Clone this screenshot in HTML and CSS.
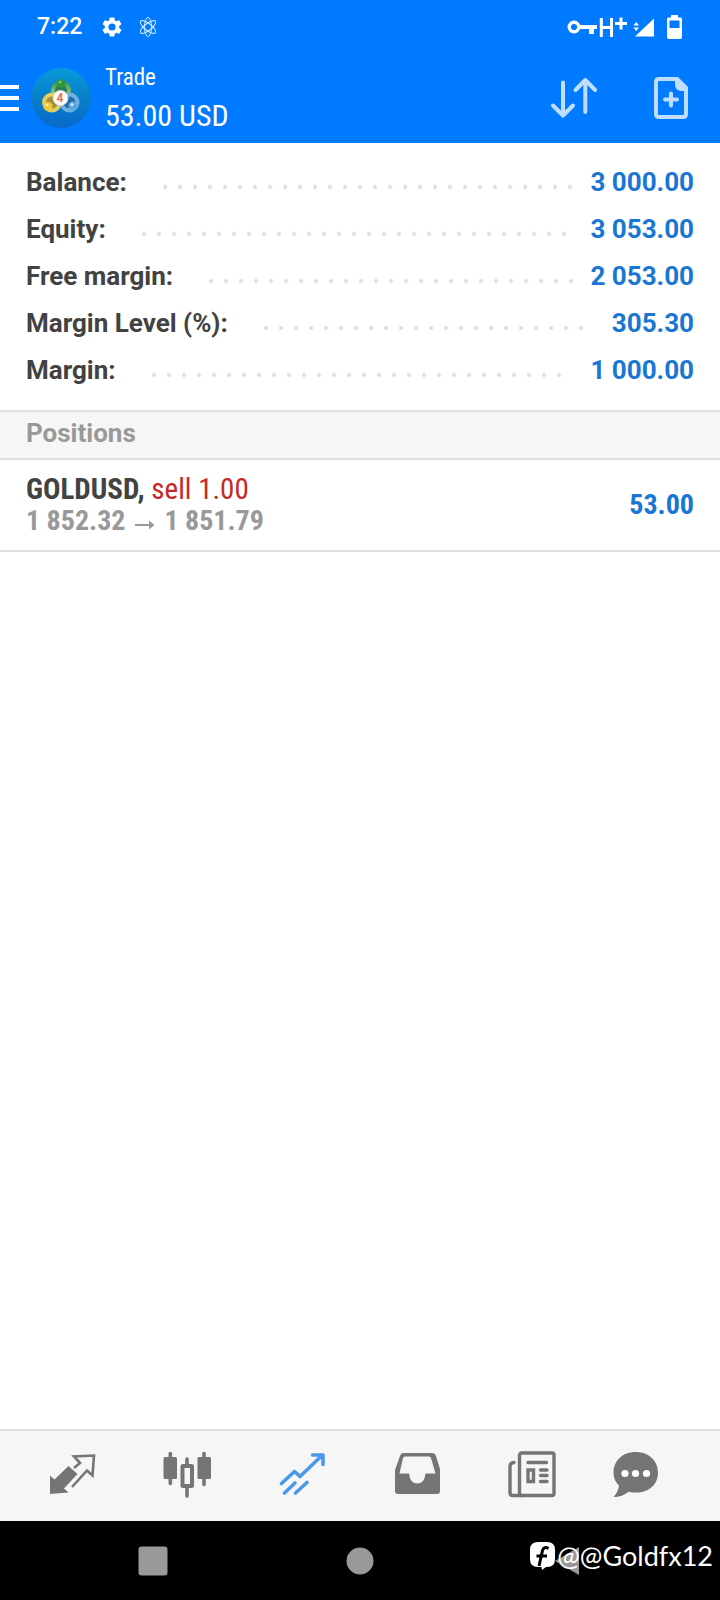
FILE: index.html
```html
<!DOCTYPE html>
<html lang="en">
<head>
<meta charset="utf-8">
<meta name="viewport" content="width=device-width, initial-scale=1">
<title>Trade</title>
<link rel="stylesheet" href="styles.css">
</head>
<body>
<div class="app">
  <div class="status">
    <span class="status-time">7:22</span>
    <svg class="status-gear" width="24" height="24" viewBox="0 0 24 24"><path fill="#fff" d="M19.14 12.94c.04-.3.06-.61.06-.94 0-.32-.02-.64-.07-.94l2.03-1.58c.18-.14.23-.41.12-.61l-1.92-3.32c-.12-.22-.37-.29-.59-.22l-2.39.96c-.5-.38-1.03-.7-1.62-.94l-.36-2.54c-.04-.24-.24-.41-.48-.41h-3.84c-.24 0-.43.17-.47.41l-.36 2.54c-.59.24-1.13.57-1.62.94l-2.39-.96c-.22-.08-.47 0-.59.22L2.74 8.87c-.12.21-.08.47.12.61l2.03 1.58c-.05.3-.09.63-.09.94s.02.64.07.94l-2.03 1.58c-.18.14-.23.41-.12.61l1.92 3.32c.12.22.37.29.59.22l2.39-.96c.5.38 1.03.7 1.62.94l.36 2.54c.05.24.24.41.48.41h3.84c.24 0 .44-.17.47-.41l.36-2.54c.59-.24 1.13-.56 1.62-.94l2.39.96c.22.08.47 0 .59-.22l1.92-3.32c.12-.22.07-.47-.12-.61l-2.01-1.58zM12 15.6A3.6 3.6 0 1 1 12 8.400a3.6 3.6 0 0 1 0 7.200z"/></svg>
    <svg width="20" height="20" viewBox="0 0 20 20" fill="none" stroke="#d9ecff" stroke-width="1"><ellipse cx="10" cy="10" rx="3.500" ry="9.500"/><ellipse cx="10" cy="10" rx="3.500" ry="9.500" transform="rotate(52 10 10)"/><ellipse cx="10" cy="10" rx="3.500" ry="9.500" transform="rotate(-52 10 10)"/></svg>
    <svg class="status-right" width="116" height="26" viewBox="0 0 116 26" fill="#fff"><circle cx="7" cy="13" r="4.800" fill="none" stroke="#fff" stroke-width="3.400"/><path d="M11 11h19v4h-3v5h-5v-5H11z"/><path d="M34.300 4v19M44.500 4v19M34.300 13.500h10.200" fill="none" stroke="#fff" stroke-width="3"/><path d="M48 9.500h12M54 3.500v12" stroke="#fff" stroke-width="3"/><path d="M66.500 11.500 69.200 8 72 11.500zM66.500 13.500 69.200 17 72 13.500zM68 22.500 87 4.500v18z"/><path fill-rule="evenodd" d="M104 1h7v2.500h2.500q1.500 0 1.500 1.500v18q0 2-1.500 2h-12Q100 25 100 23V5q0-1.500 1.500-1.500h2.500zM102.500 6.500v7.500h10V6.500z"/></svg>
  </div>
  <header class="bar">
    <button class="menu" aria-label="Menu"><svg width="19" height="28" viewBox="0 0 19 28"><path d="M0 3h19M0 14h19M0 25h19" stroke="#fff" stroke-width="4"/></svg></button>
    <svg class="logo" width="60" height="60" viewBox="0 0 60 60">
      <defs>
        <linearGradient id="sky" x1="0" y1="0" x2="0" y2="1"><stop offset="0" stop-color="#089bdc"/><stop offset=".5" stop-color="#087fc8"/><stop offset="1" stop-color="#0868cc"/></linearGradient>
        <linearGradient id="green" x1="0" y1="0" x2="0" y2="1"><stop offset="0" stop-color="#3f9a48"/><stop offset="1" stop-color="#b4d9a0"/></linearGradient>
      </defs>
      <circle cx="30" cy="30" r="30" fill="url(#sky)"/>
      <circle cx="30" cy="22.500" r="8" fill="#2a7d5a" stroke="url(#green)" stroke-width="4"/><circle cx="30" cy="15.500" r="4.500" fill="#2f9440"/><circle cx="29" cy="14" r="1.500" fill="#7cc870"/>
      <circle cx="21" cy="34.500" r="8" fill="#a58d3c" stroke="#e3cd62" stroke-width="4"/><circle cx="17" cy="38.500" r="4.500" fill="#edc93a"/><circle cx="16" cy="37" r="1.500" fill="#fff0a0"/>
      <circle cx="38.500" cy="34.500" r="8" fill="#236cad" stroke="#6fb2e0" stroke-width="4"/><circle cx="42" cy="38" r="4.500" fill="#5ba6de"/><circle cx="41" cy="36.500" r="1.500" fill="#d7f1ff"/>
      <circle cx="29.500" cy="30" r="7.500" fill="#fff" stroke="#d9d5c8"/><text class="logo-digit" x="29" y="34">4</text>
    </svg>
    <h1 class="title">Trade<span class="title-sum">53.00 USD</span></h1>
    <button class="tool" aria-label="Sort"><svg width="48" height="44" viewBox="0 0 48 44" fill="none" stroke="#bfdeff" stroke-width="4" stroke-linecap="round" stroke-linejoin="round"><path d="M13 6.500v33M3 29.500l10 10 10-10M35.300 36V4M25.500 14l9.800-10 9.800 10"/></svg></button>
    <button class="tool" aria-label="New order"><svg width="36" height="44" viewBox="0 0 36 44"><path d="M24 3H6Q3 3 3 6v32q0 3 3 3h24q3 0 3-3V12" fill="none" stroke="#bfdeff" stroke-width="4"/><path d="M22 1h3l10 10v4h-7.500Q22 14 22 8z" fill="#bfdeff"/><path d="M18 17.500v12M12 23.500h12" stroke="#bfdeff" stroke-width="4" stroke-linecap="round"/></svg></button>
  </header>
  <main class="main">
    <dl class="account">
      <div class="line"><dt>Balance:</dt><dd>3 000.00</dd></div>
      <div class="line line-short"><dt>Equity:</dt><dd>3 053.00</dd></div>
      <div class="line"><dt>Free margin:</dt><dd>2 053.00</dd></div>
      <div class="line line-short"><dt>Margin Level (%):</dt><dd>305.30</dd></div>
      <div class="line line-short"><dt>Margin:</dt><dd>1 000.00</dd></div>
    </dl>
    <h2 class="section">Positions</h2>
    <div class="position">
      <div>
        <div class="deal"><b>GOLDUSD,</b> <span class="sell">sell 1.00</span></div>
        <div class="prices">1 852.32 <svg width="20" height="12" viewBox="0 0 20 12" fill="none" stroke="#999" stroke-width="2"><path d="M0 7h17"/><path d="M14 2.500 19.500 7 14 11.500z" fill="#999" stroke="none"/></svg> 1 851.79</div>
      </div>
      <b class="profit">53.00</b>
    </div>
  </main>
  <nav class="tabs">
    <button aria-label="Quotes"><svg width="48" height="48" viewBox="0 0 48 48"><path d="M2 24.500l4.500 4L20.500 15l9 8L16 37.500l4.500 4L2 43z" fill="#757575"/><path d="M26 17l6-5-6-6.500 20-1-1.500 20-5.500-5L24 36" fill="none" stroke="#757575" stroke-width="2.600"/></svg></button>
    <button aria-label="Charts"><svg width="48" height="48" viewBox="0 0 48 48" fill="#757575"><rect x=".5" y="6" width="13.500" height="22" rx="1.500"/><rect x="34.500" y="6" width="13.500" height="22" rx="1.500"/><path d="M7.300 2.500v30M41 2.500v31M24 8v7M24 36v9" stroke="#757575" stroke-width="3.600" stroke-linecap="round"/><rect x="19.500" y="15" width="9.500" height="20" fill="none" stroke="#757575" stroke-width="4" rx=".5"/></svg></button>
    <button aria-label="Trade"><svg width="48" height="48" viewBox="0 0 48 48" fill="none" stroke="#4a98e9" stroke-width="3.600" stroke-linecap="round" stroke-linejoin="round"><path d="M3.500 32.500 16.500 20.500 22 25.500 44 4.500M34.500 4H45v9.500M6.500 42l10.500-10M17.500 42 29 31.500"/></svg></button>
    <button aria-label="History"><svg width="48" height="48" viewBox="0 0 48 48"><path fill="#757575" fill-rule="evenodd" d="M10.500 2h28q3.500 0 4.500 3l4 13v22q0 3-3 3H5q-3 0-3-3V19L7 5q1-3 3.500-3zM12 5.500q-1.500 0-2 1.500L6.500 22.500h9.500q1 10 8.300 10t8.200-10h10L38 7q-.5-1.500-2-1.500z"/></svg></button>
    <button aria-label="News"><svg width="48" height="48" viewBox="0 0 48 48" fill="none" stroke="#757575" stroke-width="3.400" stroke-linecap="round" stroke-linejoin="round"><rect x="11.500" y="2" width="34.500" height="42.500" rx="2"/><path d="M6 11.500Q2 12 2 15v27q0 2.500 3 2.500h9M20 11.500h18.500M32.500 19h6.500M32.500 24.500h6.500M32.500 30.500h6.500"/><path d="M20 19h5.500v11.500H20z" stroke-linejoin="miter"/></svg></button>
    <button aria-label="Messages"><svg width="48" height="48" viewBox="0 0 48 48"><path fill="#757575" d="M24.500 1C12 1 2.500 9.500 2.500 21.500c0 6 2.500 10 5.500 13C7.500 39 5.500 43 2.500 46c6 0 11-2 15-5.300 18 4 29.500-6 29.500-19C47 9.500 37.500 1 24.500 1z"/><g fill="#fff"><circle cx="14" cy="22.500" r="3.600"/><circle cx="24.500" cy="22.500" r="3.600"/><circle cx="35.500" cy="22.500" r="3.600"/></g></svg></button>
  </nav>
  <footer class="system">
    <button aria-label="Recent apps"><svg width="30" height="30" viewBox="0 0 30 30"><rect x=".5" y=".5" width="29" height="29" rx="3" fill="#999"/></svg></button>
    <button aria-label="Home"><svg width="30" height="30" viewBox="0 0 30 30"><circle cx="15" cy="15" r="13.500" fill="#999"/></svg></button>
    <button aria-label="Back"><svg width="26" height="30" viewBox="0 0 26 30"><path d="M1 15 25 1v28z" fill="#999"/></svg></button>
    <div class="credit"><svg width="25" height="28" viewBox="0 0 25 28"><path d="M8 0h9q8 0 8 8v9q0 8-8 8h-1l-4 3-.5-3H8q-8 0-8-8V8q0-8 8-8z" fill="#fff"/><path d="M18.500 6.500q-4.500-2.500-6 2L9 24M6.500 14h10.500" fill="none" stroke="#000" stroke-width="3"/></svg>@@Goldfx12</div>
  </footer>
</div>
</body>
</html>
```
FILE: styles.css
```css
* { box-sizing: border-box; }

body {
  margin: 0;
  background: #fff;
  color: #424242;
  font-family: Roboto, "Noto Sans", sans-serif;
}

svg { display: block; flex: none; }

button {
  display: flex;
  align-items: center;
  justify-content: center;
  padding: 0;
  border: 0;
  background: none;
}

.app {
  display: flex;
  flex-direction: column;
  min-height: 100vh;
}

.status {
  display: flex;
  align-items: center;
  height: 53px;
  padding: 0 37px;
  background: #007bff;
  color: #fff;
}

.status-time {
  font-size: 23px;
  font-weight: 500;
}

.status-gear { margin: 0 14px 0 18px; }
.status-right { margin-left: auto; }

.bar {
  display: flex;
  align-items: center;
  height: 90px;
  padding-right: 31px;
  background: #007bff;
  color: #fff;
}

.logo { margin: 0 14px 0 12px; }

.logo-digit {
  fill: #e8714a;
  font-size: 12px;
  font-weight: 700;
  text-anchor: middle;
}

.title {
  flex: 1;
  margin: 0;
  font: 400 23px/36px "Roboto Condensed", Roboto, sans-serif;
}

.title-sum {
  display: block;
  font-size: 30px;
  line-height: 40px;
}

.tool + .tool { margin-left: 55px; }

.main { flex: 1; }

.account {
  margin: 0;
  padding: 16px 26px;
  font-size: 26px;
  font-weight: 700;
  line-height: 47px;
}

.line { display: flex; }

.line::before {
  content: "";
  order: 1;
  flex: 1;
  margin: 0 15px 0 36px;
  background: radial-gradient(circle at 2px 28px, #ddd 1px, transparent 3px) 0 0 / 15px 47px repeat-x;
}

.line-short::before { margin-right: 23px; }

.line dd {
  order: 2;
  margin: 0;
  color: #1976d2;
}

.section {
  margin: 0;
  padding: 0 26px 4px;
  border: solid #e0e0e0;
  border-width: 2px 0;
  background: #f6f6f6;
  color: #999;
  font-size: 26px;
  font-weight: 700;
  line-height: 42px;
}

.position {
  display: flex;
  align-items: center;
  justify-content: space-between;
  padding: 13px 26px;
  border-bottom: 2px solid #e0e0e0;
  font: 400 28px/32px "Roboto Condensed", Roboto, sans-serif;
}

.deal { font-size: 29px; }

.sell { color: #c62828; }

.prices {
  color: #999;
  font-weight: 700;
}

.prices svg {
  display: inline-block;
  margin: 0 3px;
}

.profit { color: #1976d2; }

.tabs {
  display: grid;
  grid-template-columns: repeat(5, 115fr) 92fr;
  height: 92px;
  padding: 0 39px 2px 14px;
  border-top: 2px solid #e0e0e0;
  background: #f6f6f6;
}

.system {
  position: relative;
  display: grid;
  grid-template-columns: repeat(3, 1fr);
  height: 79px;
  padding: 0 50px;
  background: #000;
}

.credit {
  position: absolute;
  top: 18px;
  right: 7px;
  display: flex;
  align-items: center;
  gap: 2px;
  color: #fff;
  font: 400 27px/34px Lato, "Noto Sans", sans-serif;
}
```
